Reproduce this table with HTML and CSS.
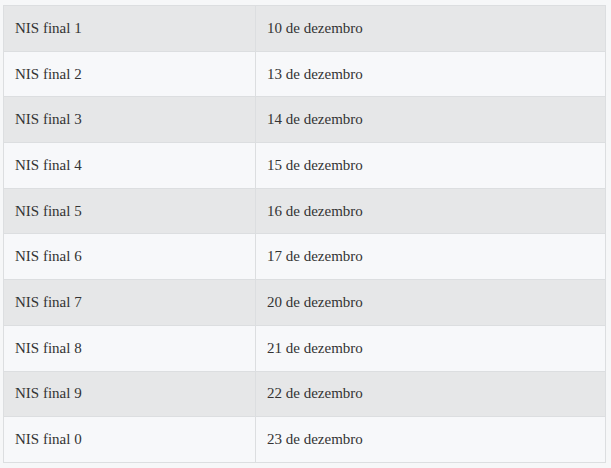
FILE: index.html
```html
<!DOCTYPE html>
<html lang="pt-BR">
<head>
  <meta charset="UTF-8">
  <meta name="viewport" content="width=device-width, initial-scale=1.0">
  <title>Calendário NIS</title>
  <link rel="stylesheet" href="styles.css">
</head>
<body>

<div class="wrap">
  <table class="calendario">
    <colgroup>
      <col class="col-nis">
      <col>
    </colgroup>
    <tbody>
      <tr><td>NIS final 1</td><td>10 de dezembro</td></tr>
      <tr><td>NIS final 2</td><td>13 de dezembro</td></tr>
      <tr><td>NIS final 3</td><td>14 de dezembro</td></tr>
      <tr><td>NIS final 4</td><td>15 de dezembro</td></tr>
      <tr><td>NIS final 5</td><td>16 de dezembro</td></tr>
      <tr><td>NIS final 6</td><td>17 de dezembro</td></tr>
      <tr><td>NIS final 7</td><td>20 de dezembro</td></tr>
      <tr><td>NIS final 8</td><td>21 de dezembro</td></tr>
      <tr><td>NIS final 9</td><td>22 de dezembro</td></tr>
      <tr><td>NIS final 0</td><td>23 de dezembro</td></tr>
    </tbody>
  </table>
</div>

</body>
</html>
```

FILE: styles.css
```css
* { margin: 0; padding: 0; box-sizing: border-box; }

html, body {
  background: #f6f7f8;
  color: #333;
  font-family: 'Liberation Serif', 'Times New Roman', serif;
  font-size: 15px;
}

.wrap {
  padding: 5px 5px 0 3px;
}

.calendario {
  width: 603px;
  border-collapse: collapse;
  table-layout: fixed;
  border: 1px solid #dcdee0;
}

.col-nis { width: 252px; }

.calendario td {
  height: 45.7px;
  padding: 0 11px;
  border: 1px solid #dcdee0;
  vertical-align: middle;
}

.calendario tr:nth-child(odd) { background: #e6e7e8; }
.calendario tr:nth-child(even) { background: #f7f8fa; }
```
